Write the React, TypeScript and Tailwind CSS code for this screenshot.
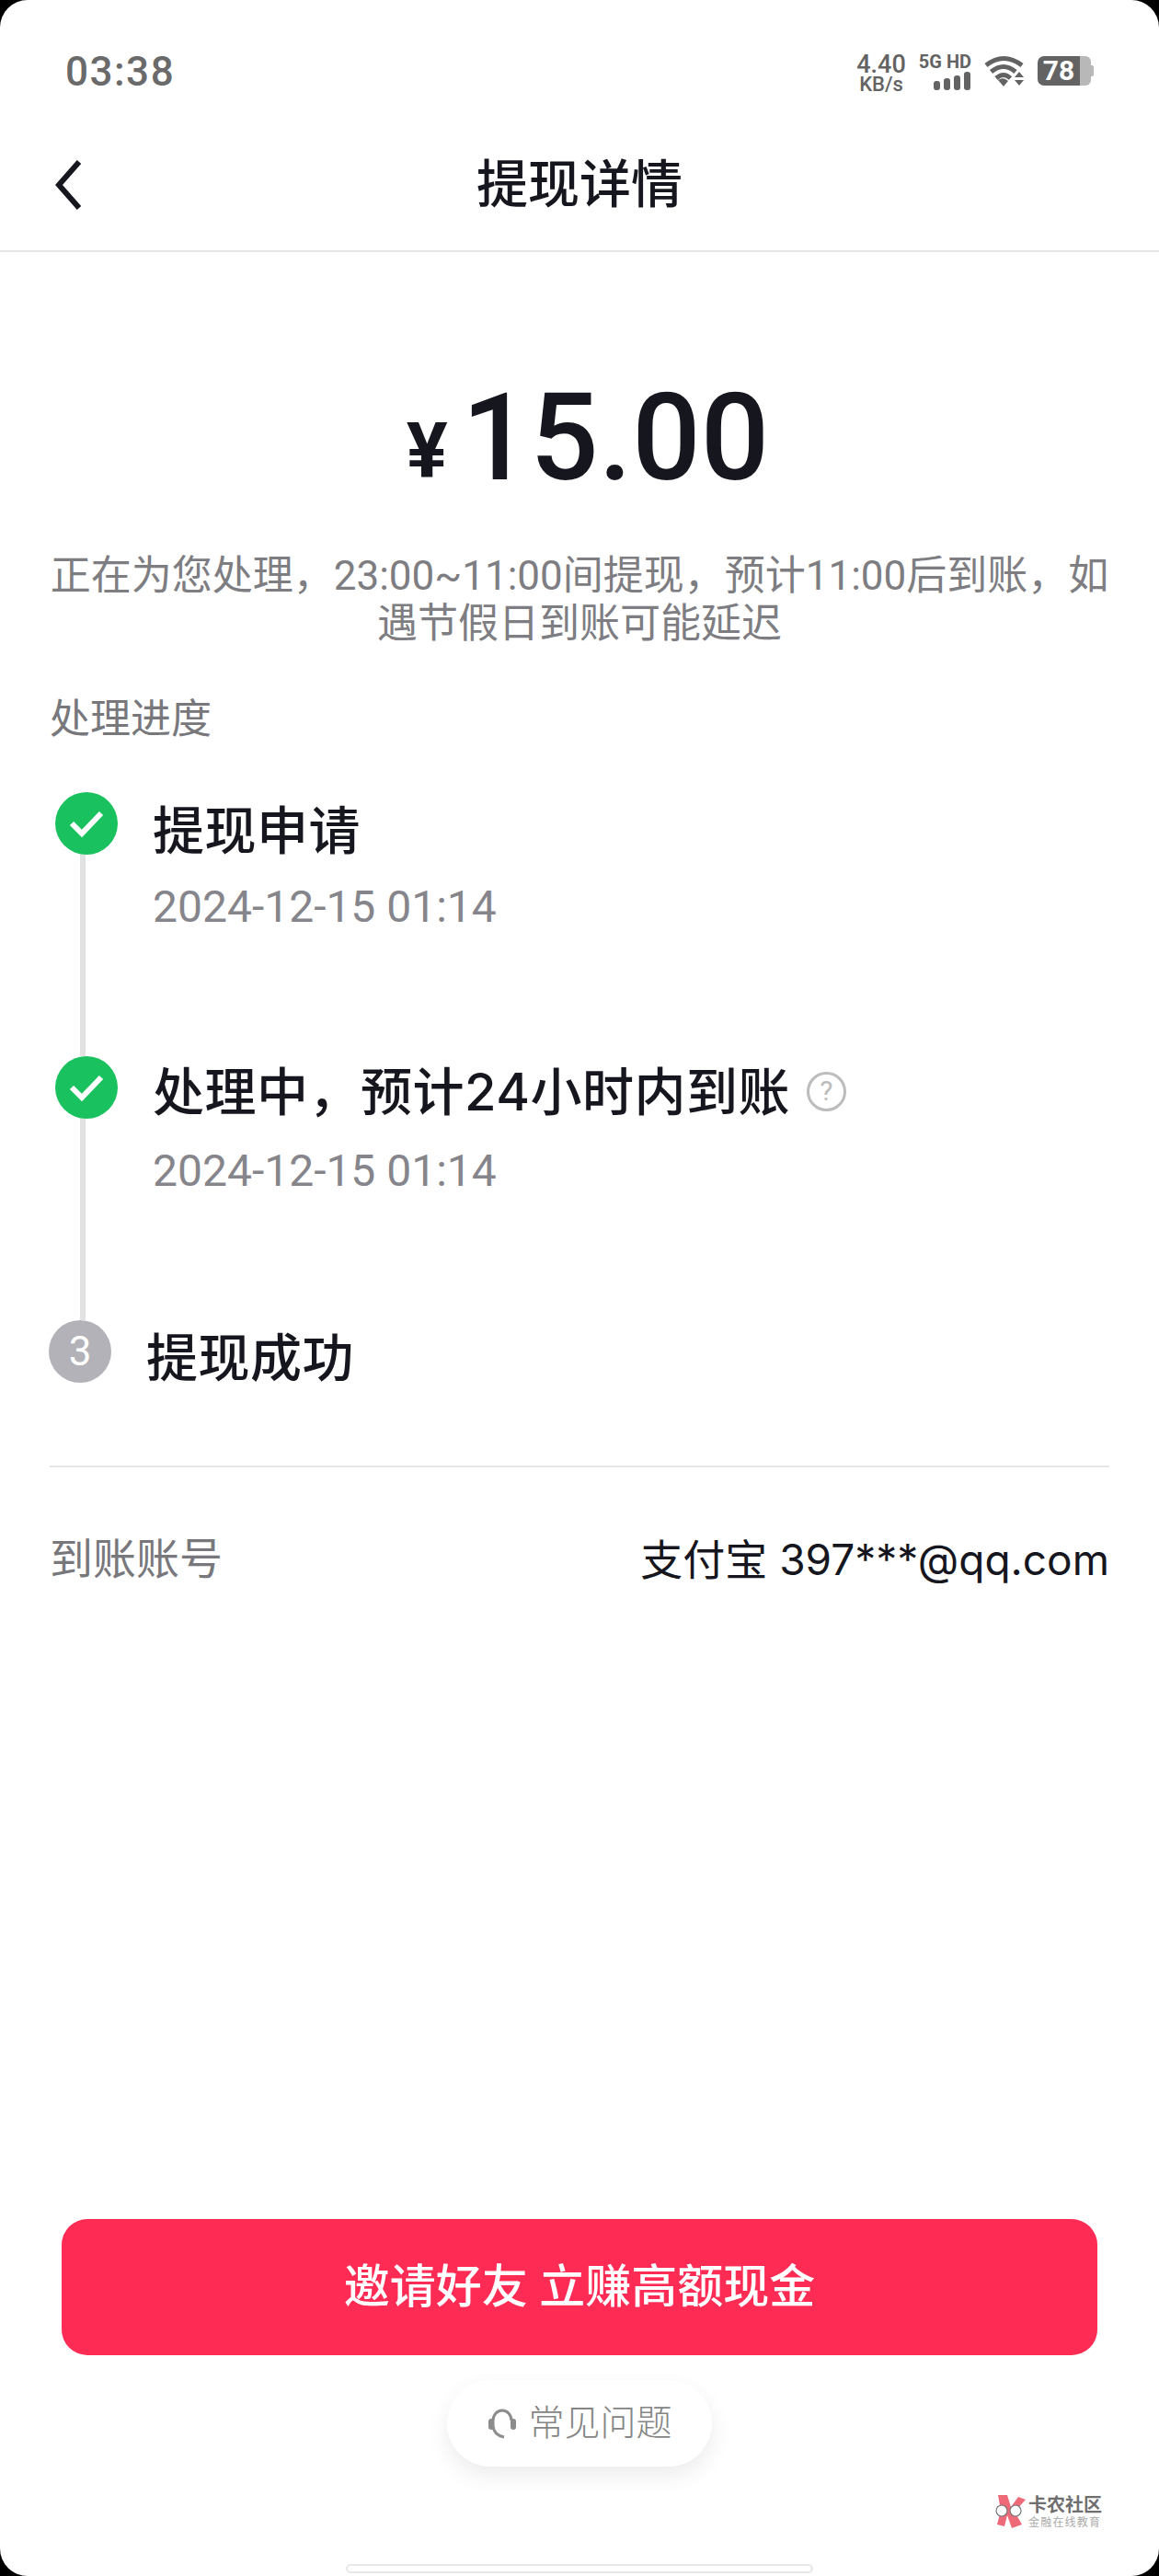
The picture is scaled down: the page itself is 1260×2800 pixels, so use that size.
import React from 'react'

const font = "font-['Roboto','Noto_Sans_CJK_SC',sans-serif]"

function StatusBar() {
  return (
    <div className="flex h-[146px] items-start justify-between pl-[71px] pr-[70px] pt-[53px]">
      <span className="text-[44px] font-medium leading-[50px] tracking-[1.5px] text-[#6a6a6a]">03:38</span>
      <div className="flex items-start pt-[5px] text-[#636363]">
        <div className="flex w-[60px] flex-col items-center font-medium">
          <span className="text-[27px] leading-[24px]">4.40</span>
          <span className="text-[22px] leading-[20px]">KB/s</span>
        </div>
        <div className="ml-[10px] flex w-[58px] flex-col items-end">
          <span className="whitespace-nowrap text-[20px] font-bold leading-[18px]">5G HD</span>
          <svg width="42" height="20" viewBox="0 0 42 20" className="mt-[2px]" fill="#636363">
            <rect x="1" y="10" width="7" height="10" rx="3" />
            <rect x="12" y="7" width="7" height="13" rx="3" />
            <rect x="23" y="4" width="7" height="16" rx="3" />
            <rect x="34" y="0" width="7" height="20" rx="3" />
          </svg>
        </div>
        <svg width="44" height="34" viewBox="0 0 44 34" className="ml-[14px] mt-[2px]" fill="none" stroke="#636363" strokeWidth="5">
          <path d="M2 11 Q21 -4 41 11" />
          <path d="M7.5 18 Q21 7 34 18" />
          <path d="M13 25 Q21 18 28.5 25" />
          <path d="M15 27 L21 34 L26 28 Q21 23 15 27 Z" fill="#636363" stroke="none" />
          <path d="M33 24 L38 18 L43 24 Z M33 27 L43 27 L38 33 Z" fill="#636363" stroke="none" />
        </svg>
        <div className="ml-[14px] mt-[3px] flex h-[32px] w-[62px] items-center">
          <div className="flex h-[32px] w-[46px] items-center justify-center rounded-l-[7px] bg-[#636363] text-[30px] font-bold leading-none text-white">78</div>
          <div className="h-[32px] w-[12px] rounded-r-[6px] bg-[#b8b8b8]" />
          <div className="h-[12px] w-[3px] rounded-r-[2px] bg-[#b8b8b8]" />
        </div>
      </div>
    </div>
  )
}

function NavBar() {
  return (
    <div className="grid h-[128px] grid-cols-[1fr_auto_1fr] items-center border-b-2 border-[#e6e6e6] px-[60px] pb-[16px]">
      <svg width="28" height="54" viewBox="0 0 28 54" fill="none" stroke="#16161e" strokeWidth="6">
        <path d="M26 2 L4 27 L26 52" />
      </svg>
      <h1 className="text-[56px] font-medium leading-[70px] text-[#16161e]">提现详情</h1>
      <div />
    </div>
  )
}

function CheckDot() {
  return (
    <div className="flex h-[68px] w-[68px] shrink-0 items-center justify-center rounded-full bg-[#1ac15f]">
      <svg width="38" height="32" viewBox="0 0 38 32" fill="none" stroke="white" strokeWidth="6">
        <path d="M3 16 L14 27 L35 5" />
      </svg>
    </div>
  )
}

function Step({ title, date, help }: { title: string; date: string; help?: boolean }) {
  return (
    <div className="flex h-[287px]">
      <div className="flex w-[68px] shrink-0 flex-col">
        <CheckDot />
        <div className="ml-[27px] w-[6px] flex-1 bg-[#e2e2e2]" />
      </div>
      <div className="ml-[38px] pt-[8px]">
        <div className="flex items-center">
          <span className={`font-['Inter','Noto_Sans_CJK_SC',sans-serif] text-[56px] font-medium leading-[68px] tracking-[0.5px] text-[#16161e] ${help ? '-mt-[3px] mb-[3px]' : ''}`}>{title}</span>
          {help && (
            <span className="mb-[8px] ml-[18px] flex h-[43px] w-[43px] items-center justify-center rounded-full border-[3px] border-[#bcbcbc] text-[30px] leading-none text-[#bcbcbc]">?</span>
          )}
        </div>
        <div className="mt-[19px] text-[48px] leading-[60px] text-[#85858b]">{date}</div>
      </div>
    </div>
  )
}

function Watermark() {
  return (
    <div className="absolute left-[1081px] top-[2712px] flex items-start">
      <svg width="36" height="36" viewBox="0 0 36 36">
        <path d="M4 0 L14 0 L18 13 L26 2 L34 5 L22 18 L30 32 L19 36 L14 22 L11 34 L3 32 L7 17 Z" fill="#ee6a78" />
        <circle cx="8" cy="17" r="6" fill="#fff" stroke="#777" strokeWidth="1.2" />
        <circle cx="23" cy="17" r="6" fill="#fff" stroke="#777" strokeWidth="1.2" />
      </svg>
      <div className="ml-[1px] flex flex-col">
        <span className="text-[20px] font-bold leading-[23px] text-[#6f6f6f]">卡农社区</span>
        <span className="text-[12px] leading-[14px] tracking-[1.2px] text-[#aaaaaa]">金融在线教育</span>
      </div>
    </div>
  )
}

export default function App() {
  return (
    <div className={`w-[1260px] bg-black ${font}`}>
      <div className="relative flex h-[2800px] flex-col overflow-hidden rounded-[30px] bg-white">
        <StatusBar />
        <NavBar />

        <div className="mt-[141px] flex items-end justify-center pl-[18px]">
          <span className="mb-[1px] mr-[15px] text-[84px] font-bold leading-[90px] text-[#16161e]">¥</span>
          <span className="text-[131px] font-medium leading-[122px] text-[#16161e]">15.00</span>
        </div>

        <p className="mx-[54px] mt-[63px] text-center text-[44px] leading-[52px] text-[#7d7d82]">
          正在为您处理，23:00~11:00间提现，预计11:00后到账，如遇节假日到账可能延迟
        </p>

        <div className="ml-[54px] mt-[50px] text-[44px] leading-[56px] text-[#77777c]">处理进度</div>

        <div className="ml-[60px] mt-[51px] flex flex-col">
          <Step title="提现申请" date="2024-12-15 01:14" />
          <Step title="处理中，预计24小时内到账" date="2024-12-15 01:14" help />
          <div className="-ml-[7px] flex items-start">
            <div className="flex h-[68px] w-[68px] items-center justify-center rounded-full bg-[#b2b2b8] text-[44px] leading-none text-white">3</div>
            <span className="ml-[38px] pt-[8px] text-[56px] font-medium leading-[68px] tracking-[0.5px] text-[#16161e]">提现成功</span>
          </div>
        </div>

        <div className="mx-[54px] mt-[82px] h-[2px] bg-[#e6e6e6]" />

        <div className="mx-[54px] mt-[70px] flex items-center justify-between text-[47px] leading-[60px]">
          <span className="text-[#77777c]">到账账号</span>
          <span className="font-['Inter','Noto_Sans_CJK_SC',sans-serif] text-[46px] text-[#16161e]">支付宝 397***@qq.com</span>
        </div>

        <div className="mt-auto flex flex-col items-center">
          <button className="flex h-[148px] w-[1126px] items-center justify-center rounded-[28px] bg-[#fe2c55] text-[50px] font-medium text-white">
            邀请好友 立赚高额现金
          </button>
          <div className="mt-[27px] flex h-[94px] w-[288px] items-center justify-center rounded-full bg-white shadow-[0_10px_24px_rgba(0,0,0,0.08)]">
            <svg width="34" height="34" viewBox="0 0 34 34" fill="none" stroke="#8c8c8c" strokeWidth="3">
              <path d="M7 20 V14 A10 11 0 0 1 27 14" />
              <path d="M7 20 Q8 30 19 32" />
              <rect x="2" y="12" width="6" height="12" rx="3" fill="#8c8c8c" stroke="none" />
              <rect x="26" y="12" width="6" height="12" rx="3" fill="#8c8c8c" stroke="none" />
            </svg>
            <span className="ml-[11px] text-[39px] font-light leading-none text-[#858585]">常见问题</span>
          </div>
          <div className="mb-[3px] mt-[106px] h-[10px] w-[508px] rounded-full border-2 border-[#e8e8e8] bg-white" />
        </div>

        <Watermark />
      </div>
    </div>
  )
}
